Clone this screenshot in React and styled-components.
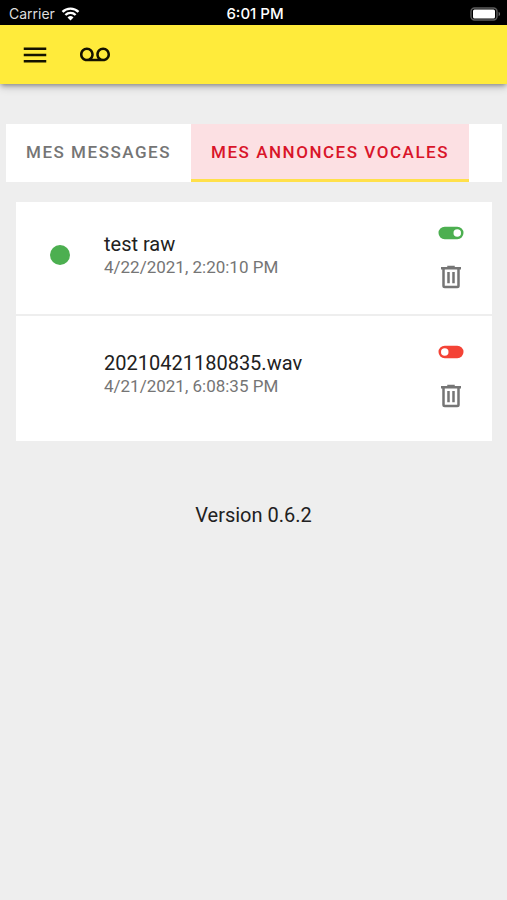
import React, { useState } from 'react';
import styled, { createGlobalStyle } from 'styled-components';

const tabs = ['Mes messages', 'Mes annonces vocales'];

const initialGreetings = [
  { id: 1, name: 'test raw', date: '4/22/2021, 2:20:10 PM', enabled: true },
  { id: 2, name: '20210421180835.wav', date: '4/21/2021, 6:08:35 PM', enabled: false },
];

const icons = {
  menu: 'M3 6h18v2H3V6m0 5h18v2H3v-2m0 5h18v2H3v-2z',
  voicemail:
    'M18.5 6C15.46 6 13 8.46 13 11.5c0 1.33.47 2.55 1.26 3.5H9.74c.79-.95 1.26-2.17 1.26-3.5C11 8.46 8.54 6 5.5 6S0 8.46 0 11.5 2.46 17 5.5 17h13c3.04 0 5.5-2.46 5.5-5.5S21.54 6 18.5 6zm-13 9C3.57 15 2 13.43 2 11.5S3.57 8 5.5 8 9 9.57 9 11.5 7.43 15 5.5 15zm13 0c-1.93 0-3.5-1.57-3.5-3.5S16.57 8 18.5 8 22 9.57 22 11.5 20.43 15 18.5 15z',
  toggleOn:
    'M17 7H7a5 5 0 0 0 0 10h10a5 5 0 0 0 0-10m0 8a3 3 0 1 1 0-6 3 3 0 0 1 0 6z',
  toggleOff:
    'M17 7H7a5 5 0 0 0 0 10h10a5 5 0 0 0 0-10M7 15a3 3 0 1 1 0-6 3 3 0 0 1 0 6z',
  trash:
    'M9 3v1H4v2h1v13a2 2 0 0 0 2 2h10a2 2 0 0 0 2-2V6h1V4h-5V3H9M7 6h10v13H7V6m2 2v9h2V8H9m4 0v9h2V8h-2z',
};

function Icon({ name }) {
  return (
    <IconSvg viewBox='0 0 24 24' aria-hidden='true'>
      <path d={icons[name]} />
    </IconSvg>
  );
}

function StatusBar() {
  return (
    <StatusWrapper>
      <div className='status__carrier'>
        <span>Carrier</span>
        <svg width='19' height='14' viewBox='0 0 18 14' aria-hidden='true'>
          <g fill='none' stroke='#ffffff' strokeWidth='2.4'>
            <path d='M1 4.9a11.4 11.4 0 0 1 16 0' />
            <path d='M3.9 8a7.2 7.2 0 0 1 10.2 0' />
          </g>
          <path d='M9 13.6 6 10.5a4.3 4.3 0 0 1 6 0z' fill='#ffffff' />
        </svg>
      </div>
      <span className='status__time'>6:01 PM</span>
      <div className='status__battery'>
        <svg width='31' height='14' viewBox='0 0 31 14' aria-hidden='true'>
          <rect x='1' y='1' width='26' height='12' rx='3.5' fill='none' stroke='#5c5c5c' strokeWidth='1.4' />
          <rect x='3' y='2.6' width='22' height='8.8' rx='1.5' fill='#ffffff' />
          <path d='M28.6 4.8c2 .8 2 3.6 0 4.4z' fill='#6c6c6c' />
        </svg>
      </div>
    </StatusWrapper>
  );
}

function GreetingRow({ greeting, onToggle, onDelete }) {
  const { name, date, enabled } = greeting;

  return (
    <Row>
      <Dot $visible={enabled} />
      <div className='row__content'>
        <p className='row__title'>{name}</p>
        <p className='row__date'>{date}</p>
      </div>
      <div className='row__actions'>
        <IconButton
          $color={enabled ? '#4caf50' : '#f44336'}
          aria-label={enabled ? 'Désactiver' : 'Activer'}
          aria-pressed={enabled}
          onClick={onToggle}
        >
          <Icon name={enabled ? 'toggleOn' : 'toggleOff'} />
        </IconButton>
        <IconButton $color='#757575' aria-label='Supprimer' onClick={onDelete}>
          <Icon name='trash' />
        </IconButton>
      </div>
    </Row>
  );
}

function App() {
  const [activeTab, setActiveTab] = useState(1);
  const [greetings, setGreetings] = useState(initialGreetings);

  const toggleGreeting = id => {
    setGreetings(greetings.map(item => (
      item.id === id ? { ...item, enabled: !item.enabled } : item
    )));
  };

  const deleteGreeting = id => {
    setGreetings(greetings.filter(item => item.id !== id));
  };

  return (
    <>
      <GlobalStyle />
      <StatusBar />
      <Toolbar>
        <IconButton $color='#141200' aria-label='Menu'>
          <Icon name='menu' />
        </IconButton>
        <IconButton $color='#141200' aria-label='Messagerie vocale'>
          <Icon name='voicemail' />
        </IconButton>
      </Toolbar>
      <Main>
        <TabBar role='tablist'>
          {tabs.map((label, index) => (
            <Tab
              key={label}
              role='tab'
              aria-selected={activeTab === index}
              $active={activeTab === index}
              onClick={() => setActiveTab(index)}
            >
              {label}
            </Tab>
          ))}
        </TabBar>
        <List>
          {greetings.map(greeting => (
            <GreetingRow
              key={greeting.id}
              greeting={greeting}
              onToggle={() => toggleGreeting(greeting.id)}
              onDelete={() => deleteGreeting(greeting.id)}
            />
          ))}
        </List>
      </Main>
      <Version>Version 0.6.2</Version>
    </>
  );
}

export default App;

const GlobalStyle = createGlobalStyle`
  * {
    box-sizing: border-box;
  }

  body {
    margin: 0;
    background: #eeeeee;
    color: #212121;
    font-family: Roboto, sans-serif;
  }

  p, ul {
    margin: 0;
    padding: 0;
  }
`;

const StatusWrapper = styled.div`
  display: grid;
  grid-template-columns: 1fr auto 1fr;
  align-items: center;
  height: 25px;
  padding: 2px 6px 0 9px;
  background: #000000;
  color: #ffffff;
  font-family: Inter, sans-serif;
  font-size: 14px;

  .status__carrier {
    display: flex;
    align-items: center;
    gap: 6px;
    color: #dddddd;
  }

  .status__time {
    font-size: 15px;
    font-weight: 500;
  }

  .status__battery {
    display: flex;
    justify-content: flex-end;
  }
`;

const Toolbar = styled.header`
  display: flex;
  align-items: center;
  gap: 30px;
  height: 59px;
  padding: 0 20px;
  background: #ffeb3b;
  box-shadow: 0 2px 5px -1px rgba(0, 0, 0, 0.4), 0 4px 8px rgba(0, 0, 0, 0.14);
`;

const IconSvg = styled.svg`
  display: block;
  width: 30px;
  height: 30px;
  fill: currentColor;
`;

const IconButton = styled.button`
  padding: 0;
  border: 0;
  background: none;
  color: ${props => props.$color};
  cursor: pointer;
`;

const Main = styled.main`
  padding: 40px 5px 0 6px;
`;

const TabBar = styled.div`
  display: flex;
  height: 58px;
  background: #ffffff;
`;

const Tab = styled.button`
  padding: 1px 20px 0;
  border: 0;
  border-bottom: 3px solid ${props => (props.$active ? '#ffe04a' : 'transparent')};
  background: ${props => (props.$active ? '#fce0e3' : 'none')};
  color: ${props => (props.$active ? '#d9152a' : '#757575')};
  font-family: inherit;
  font-size: 17px;
  font-weight: 500;
  letter-spacing: 0.09em;
  text-transform: uppercase;
  cursor: pointer;
`;

const List = styled.ul`
  margin: 20px 10px 0;
  padding-bottom: 8px;
  background: #ffffff;
  list-style: none;
`;

const Row = styled.li`
  display: flex;
  align-items: center;
  padding: 16px 26px 22px 34px;

  & + & {
    padding-top: 21px;
    border-top: 2px solid #eeeeee;
  }

  .row__content {
    flex: 1;
    margin-left: 34px;
  }

  .row__title {
    font-size: 20px;
    line-height: 24px;
  }

  .row__date {
    color: #757575;
    font-size: 17px;
    line-height: 22px;
  }

  .row__actions {
    display: flex;
    flex-direction: column;
    gap: 14px;
  }
`;

const Dot = styled.span`
  width: 20px;
  height: 20px;
  border-radius: 50%;
  background: ${props => (props.$visible ? '#4caf50' : 'transparent')};
`;

const Version = styled.footer`
  padding: 62px 0 24px;
  font-size: 20px;
  line-height: 24px;
  text-align: center;
`;
